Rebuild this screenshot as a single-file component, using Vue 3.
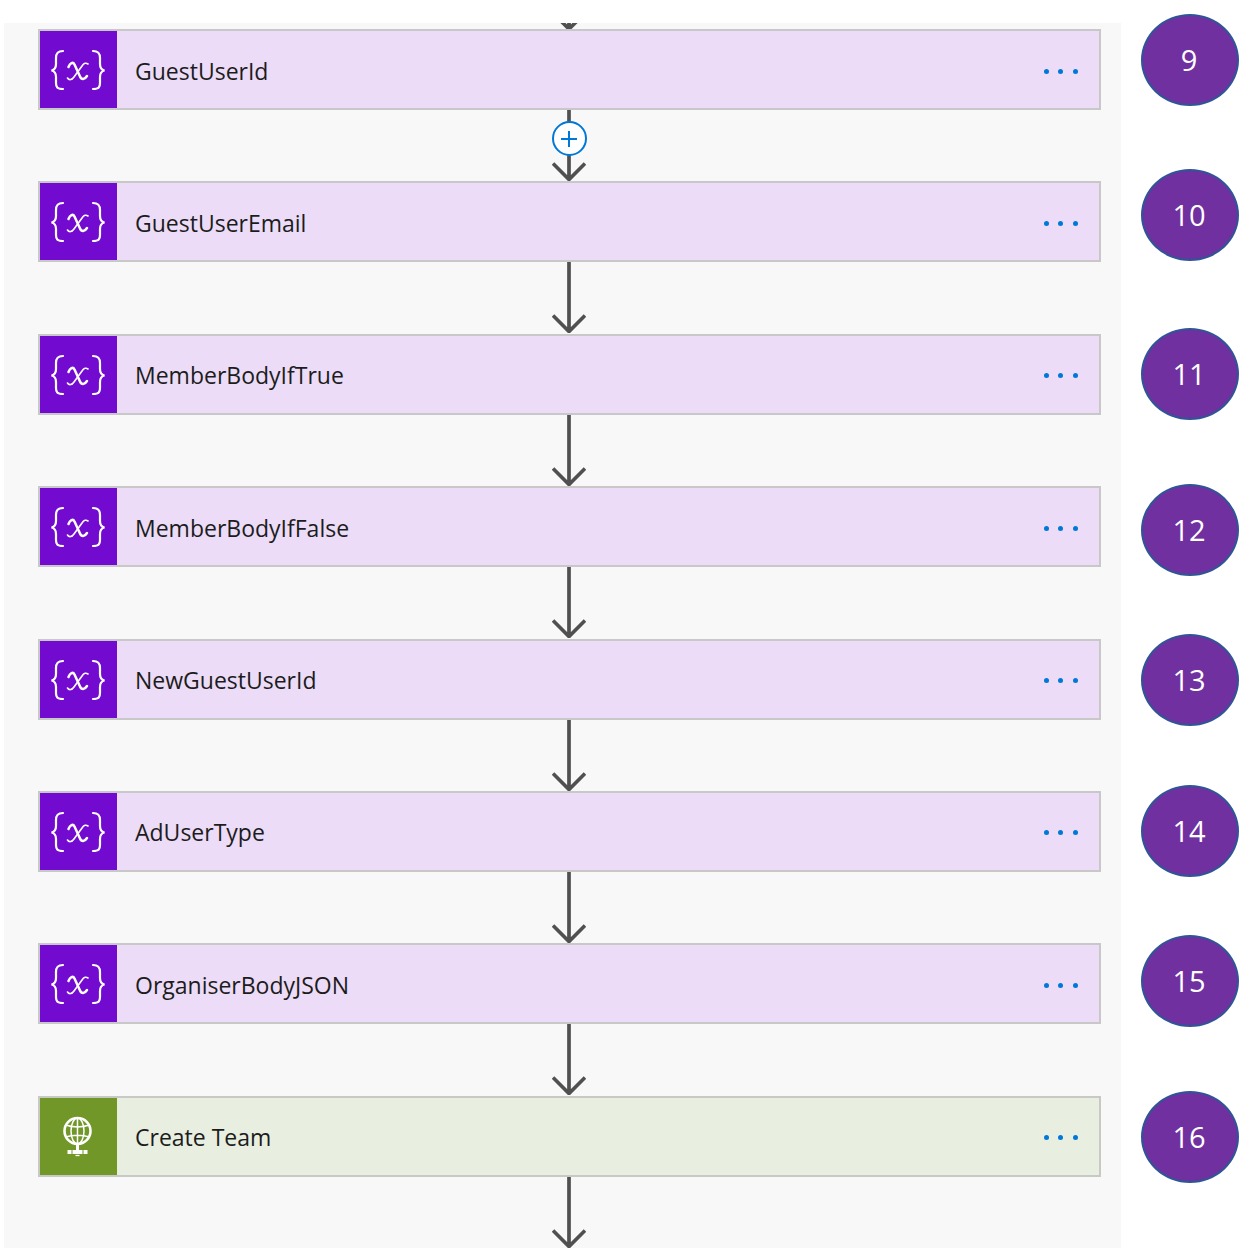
<template>
  <div class="page">
    <div class="flow">
      <div class="connector connector--cut">
        <svg width="34" height="6" viewBox="0 63 34 6">
          <path d="M17 50V68M6 58l11 11 11-11" class="arrow" />
        </svg>
      </div>

      <template v-for="(step, i) in steps" :key="step.name">
        <div class="card" :class="step.http ? 'card--http' : 'card--var'">
          <div class="card__icon">
            <svg v-if="step.http" width="77" height="77" viewBox="1 0 77 77" fill="none" stroke="#fff">
              <circle cx="38.500" cy="33" r="13" stroke-width="2.600" />
              <ellipse cx="38.500" cy="33" rx="6.500" ry="13" stroke-width="1.500" />
              <path d="M38.500 20v26M26.500 27c7 2.500 17 2.500 24 0M26.500 39c7-2.500 17-2.500 24 0" stroke-width="1.500" />
              <path d="M38.500 46v6" stroke-width="3" />
              <path d="M28.500 54h20" stroke-width="4" stroke-dasharray="4 1 10 1 4" />
              <path d="M36.500 57.500h4" stroke-width="1.300" />
            </svg>
            <svg v-else width="77" height="77" viewBox="1 0 77 77" fill="none" stroke="#fff" stroke-width="2.200" stroke-linecap="round">
              <path d="M24 20C18 20 17 23 17 27V33C17 37 15 39 12.500 39.500C15 40 17 42 17 46V52C17 56 18 58 24 58" />
              <path d="M54 20C60 20 61 23 61 27V33C61 37 63 39 65.500 39.500C63 40 61 42 61 46V52C61 56 60 58 54 58" />
              <path d="M29.500 36C31 32 34 30.500 35.500 33.500L41 45.500C42.500 49 45.500 49 48 45" stroke-width="2.500" />
              <path d="M28.500 47C30 49.500 33 49 35 46L43 35C45 32 47 31.500 49 33" stroke-width="1.600" />
            </svg>
          </div>
          <div class="card__name">{{ step.name }}</div>
          <div class="card__more"><i></i><i></i><i></i></div>
        </div>

        <div class="connector">
          <svg width="34" height="71" viewBox="0 0 34 71">
            <path d="M17 0V69M1 53.500l16 16 16-16" class="arrow" />
          </svg>
          <div v-if="i === 0" class="add">
            <svg width="16" height="16" viewBox="0 0 16 16">
              <path d="M8 0V16M0 8H16" stroke="#0078d7" stroke-width="2" />
            </svg>
          </div>
        </div>
      </template>
    </div>

    <div class="numbers">
      <div
        v-for="mark in marks"
        :key="mark.n"
        class="number"
        :style="{ marginTop: mark.gap + 'px' }"
      >{{ mark.n }}</div>
    </div>
  </div>
</template>

<script setup>
const steps = [
  { name: 'GuestUserId' },
  { name: 'GuestUserEmail' },
  { name: 'MemberBodyIfTrue' },
  { name: 'MemberBodyIfFalse' },
  { name: 'NewGuestUserId' },
  { name: 'AdUserType' },
  { name: 'OrganiserBodyJSON' },
  { name: 'Create Team', http: true },
];

// gap above each badge, they were dropped on by hand so spacing is uneven
const marks = [
  { n: 9, gap: 14 },
  { n: 10, gap: 63 },
  { n: 11, gap: 67 },
  { n: 12, gap: 64 },
  { n: 13, gap: 58 },
  { n: 14, gap: 59 },
  { n: 15, gap: 58 },
  { n: 16, gap: 64 },
];
</script>

<style>
html,
body {
  background: #fff;
}
</style>

<style scoped>
.page {
  display: flex;
  align-items: flex-start;
  width: 1254px;
  height: 1258px;
  overflow: hidden;
  font-family: "Open Sans", "Noto Sans", sans-serif;
}

.flow {
  box-sizing: border-box;
  width: 1117px;
  height: 1225px;
  margin: 23px 0 0 4px;
  padding: 0 20px 0 34px;
  background: #f8f8f8;
  overflow: hidden;
}

.connector {
  position: relative;
  display: flex;
  justify-content: center;
  height: 71.400px;
  padding-right: 1px;
}

.connector--cut {
  height: 6px;
}

.arrow {
  fill: none;
  stroke: #505050;
  stroke-width: 3.700;
}

.add {
  position: absolute;
  top: 11px;
  left: 50%;
  display: flex;
  align-items: center;
  justify-content: center;
  box-sizing: border-box;
  width: 35px;
  height: 35px;
  margin-left: -18px;
  background: #fff;
  border: 2px solid #0078d7;
  border-radius: 50%;
}

.card {
  display: flex;
  align-items: center;
  box-sizing: border-box;
  height: 81px;
  border: 2px solid #c8c8c8;
}

.card--var {
  background: #ecdcf8;
}

.card--http {
  background: #e9efe0;
  border-color: #c8c8c4;
}

.card__icon {
  flex: none;
  width: 77px;
  height: 77px;
}

.card--var .card__icon {
  background: #730ad0;
}

.card--http .card__icon {
  background: #709727;
}

.card__icon svg {
  display: block;
}

.card__name {
  flex: 1;
  margin-left: 18px;
  padding-top: 2px;
  font-size: 23px;
  color: #1c1c1c;
}

.card__more {
  display: flex;
  gap: 9.700px;
  margin-right: 21px;
  padding-top: 3px;
}

.card__more i {
  width: 5px;
  height: 5px;
  background: #0078d7;
  border-radius: 50%;
}

.numbers {
  display: flex;
  flex-direction: column;
  margin-left: 20px;
}

.number {
  display: flex;
  align-items: center;
  justify-content: center;
  box-sizing: border-box;
  width: 98px;
  height: 92px;
  padding: 0 2px 2px 0;
  background: #7030a0;
  border: 2px solid #2f5597;
  border-radius: 50%;
  font-size: 29px;
  color: #fff;
}
</style>
